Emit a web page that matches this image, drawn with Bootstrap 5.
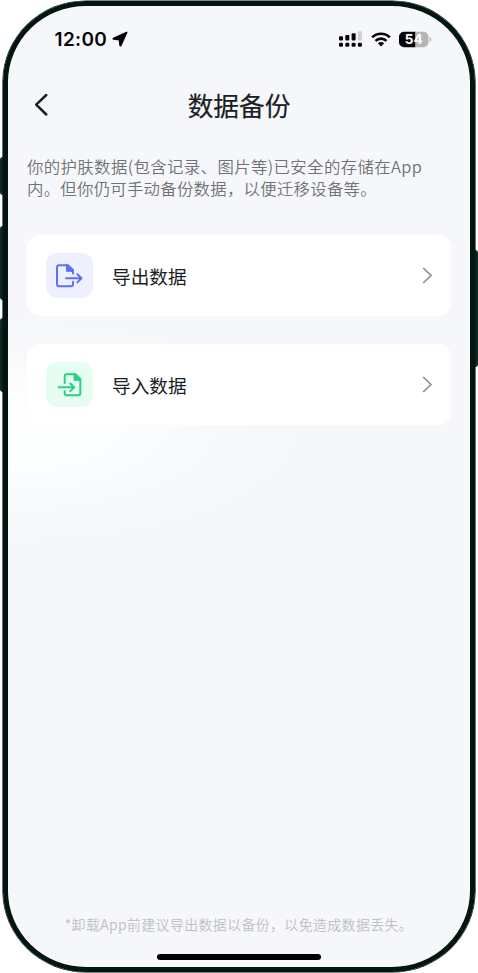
<!DOCTYPE html>
<html lang="zh-CN">
<head>
<meta charset="utf-8">
<meta name="viewport" content="width=device-width, initial-scale=1">
<title>数据备份</title>
<link href="https://cdn.jsdelivr.net/npm/bootstrap@5.3.0/dist/css/bootstrap.min.css" rel="stylesheet">
<style>
body{font-family:"Noto Sans CJK SC",sans-serif;color:#1c1e24;background:#fff}
.stage{width:478px;height:973px;padding:1px 3px 1px 3px}
.phone{height:971px;border:5px solid #04140f;border-radius:83px / 81px;box-shadow:0 0 0 .6px #04140f;background:radial-gradient(ellipse 290px 110px at 0 425px,#fdffff 0,#fbfdfe 35%,#f8f9fb 70%,#f6f7fa 100%)}
.side-key{left:0;width:4px;background:#0b2a22;border-radius:3px 0 0 3px}
.key-action{top:157px;height:38px}
.key-up{top:226px;height:74px}
.key-down{top:318px;height:74px}
.key-power{left:auto;right:0;top:250px;height:117px;border-radius:0 3px 3px 0}
.status{height:66px;padding:0 38px 0 46.5px}
.clock{font:600 19px/1 Inter,sans-serif;color:#050507;width:53px;letter-spacing:.35px}
.topbar{height:66px}
.page-title{font-size:25.7px;line-height:38px;font-weight:400;letter-spacing:0;-webkit-text-stroke:.2px currentColor}
.intro{font-size:16.4px;line-height:22px;letter-spacing:.39px;font-weight:350;color:#707276;margin:17px 0 0 19px}
.intro-tail{letter-spacing:.27px}
.panels{padding:0 19px 0 19px;margin-top:36px;gap:28px}
.panel{height:81px;border-radius:13px;background:#fff;padding:0 17px 0 19px}
.tile{width:47px;height:45px;border-radius:11px}
.tile-out{background:#eef0ff;color:#5f72ee}
.tile-in{background:#e7fdf3;color:#25d282}
.label{font-size:18.7px;line-height:28px;margin-left:19px}
.footnote{font-size:13.9px;line-height:20px;letter-spacing:.42px;color:#bdbec2;font-weight:350;margin-bottom:20.5px}
.homebar{width:164px;height:5.5px;background:#000;margin-bottom:7.5px}
svg{display:block;flex:none}
.back{left:24.5px;top:19.5px}
</style>
<script src="https://cdn.jsdelivr.net/npm/bootstrap@5.3.0/dist/js/bootstrap.bundle.min.js"></script>
</head>
<body>
<div class="stage position-relative overflow-hidden">
  <span class="side-key key-action position-absolute"></span>
  <span class="side-key key-up position-absolute"></span>
  <span class="side-key key-down position-absolute"></span>
  <span class="side-key key-power position-absolute"></span>
  <main class="phone position-relative d-flex flex-column">
    <div class="status d-flex align-items-center">
      <span class="clock text-nowrap">12:00</span>
      <svg class="ms-1" width="16" height="16" viewBox="0 0 16 16"><path d="M14.700 1.400 1.400 7.400l.1.600 6 .7.600 5.800.6.100z" fill="#050507" stroke="#050507" stroke-width="1.600" stroke-linejoin="round"/></svg>
      <div class="d-flex align-items-center ms-auto">
        <svg width="24" height="16" viewBox="0 0 24 16" fill="#050507"><rect x="0" y="5.200" width="4" height="4.300" rx="1"/><rect x="6.300" y="4" width="4" height="5.500" rx="1"/><rect x="12.600" y="2.200" width="4" height="7.300" rx="1"/><rect x="18.900" y=".3" width="4" height="9.200" rx="1" fill="#cfd0d2"/><rect x="0" y="11.700" width="4" height="4" rx="1.200"/><rect x="6.300" y="11.700" width="4" height="4" rx="1.200"/><rect x="12.600" y="11.700" width="4" height="4" rx="1.200"/><rect x="18.900" y="11.700" width="4" height="4" rx="1.200"/></svg>
        <svg class="ms-2" width="20" height="15" viewBox="0 0 20 15" fill="none" stroke="#050507" stroke-width="2.600"><path d="M1.200 5.400a12.500 12.500 0 0 1 17.600 0M4.500 8.900a7.800 7.800 0 0 1 11 0"/><path d="M10 14.400 6.900 11.300a4.400 4.400 0 0 1 6.200 0z" fill="#050507" stroke="none"/></svg>
        <svg class="ms-2" width="33" height="17" viewBox="0 0 33 17"><path d="M5 .7h11.500v15.600H5A5 5 0 0 1 0 11.300V5.700a5 5 0 0 1 5-5z" fill="#050507"/><path d="M16.500.7H24.500a5 5 0 0 1 5 5v5.600a5 5 0 0 1-5 5h-8z" fill="#b4b5b7"/><path d="M30.700 6v5c2-.7 2-4.300 0-5z" fill="#b4b5b7"/><text x="14.700" y="13.300" text-anchor="middle" font-family="Inter,sans-serif" font-size="13.500" font-weight="700" fill="#fff">54</text></svg>
      </div>
    </div>
    <header class="topbar position-relative d-flex align-items-center justify-content-center">
      <svg class="back position-absolute" width="18" height="26" viewBox="0 0 18 26" fill="none" stroke="#1c1e24" stroke-width="2.500" stroke-linecap="round" stroke-linejoin="round"><path d="M13.300 3 3.200 12.700l10.100 9.800"/></svg>
      <h1 class="page-title m-0">数据备份</h1>
    </header>
    <p class="intro text-nowrap">你的护肤数据(包含记录、图片等)已安全的存储在App<br><span class="intro-tail">内。但你仍可手动备份数据，以便迁移设备等。</span></p>
    <div class="panels d-flex flex-column">
      <div class="panel d-flex align-items-center">
        <span class="tile tile-out d-flex align-items-center justify-content-center">
          <svg width="47" height="45" viewBox="0 0 47 45" fill="none" stroke="currentColor" stroke-width="2" stroke-linecap="round" stroke-linejoin="round"><path d="M27 20.500v-3.500L22 12.300H13q-2 0-2 2v17q0 2 2 2h12q2 0 2-2v-2.500"/><path d="M20.500 12v6.300H27z" fill="currentColor" stroke-width="1"/><path d="M20 25.300h15.500M31.300 21.200l4.200 4.100-4.200 4.100"/></svg>
        </span>
        <span class="label">导出数据</span>
        <svg class="ms-auto" width="12" height="17" viewBox="0 0 12 17" fill="none" stroke="#8b8c8f" stroke-width="1.600"><path d="M1.200 1 9 8.500 1.200 16"/></svg>
      </div>
      <div class="panel d-flex align-items-center">
        <span class="tile tile-in d-flex align-items-center justify-content-center">
          <svg width="47" height="45" viewBox="0 0 47 45" fill="none" stroke="currentColor" stroke-width="2" stroke-linecap="round" stroke-linejoin="round"><path d="M18.700 21v-6.700q0-2 2-2H29.500l4.800 4.700v14.300q0 2-2 2H20.700q-2 0-2-2v-2"/><path d="M28 12v6.300h6.300z" fill="currentColor" stroke-width="1"/><path d="M12.700 25.300h15.300M24.300 21.500l3.900 3.800-3.900 3.800"/></svg>
        </span>
        <span class="label">导入数据</span>
        <svg class="ms-auto" width="12" height="17" viewBox="0 0 12 17" fill="none" stroke="#8b8c8f" stroke-width="1.600"><path d="M1.200 1 9 8.500 1.200 16"/></svg>
      </div>
    </div>
    <p class="footnote text-center text-nowrap mt-auto">*卸载App前建议导出数据以备份，以免造成数据丢失。</p>
    <div class="homebar rounded-pill mx-auto"></div>
  </main>
</div>
</body>
</html>
